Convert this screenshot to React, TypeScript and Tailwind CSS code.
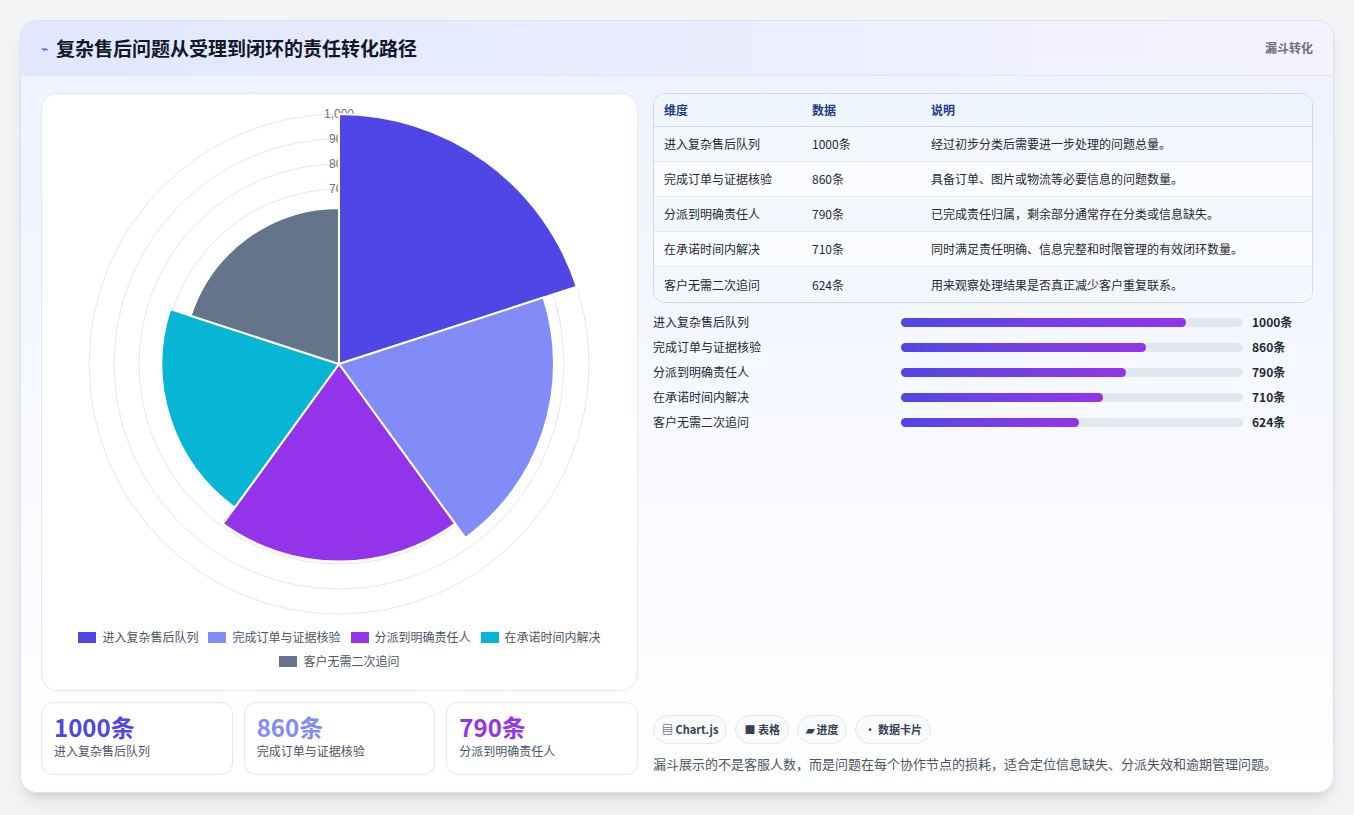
const F = { fontFamily: '"Noto Sans CJK SC", "Liberation Sans", sans-serif' };

const rows = [
  { name: "进入复杂售后队列", v: 1000, note: "经过初步分类后需要进一步处理的问题总量。", color: "#4f46e5" },
  { name: "完成订单与证据核验", v: 860, note: "具备订单、图片或物流等必要信息的问题数量。", color: "#818cf8" },
  { name: "分派到明确责任人", v: 790, note: "已完成责任归属，剩余部分通常存在分类或信息缺失。", color: "#9333ea" },
  { name: "在承诺时间内解决", v: 710, note: "同时满足责任明确、信息完整和时限管理的有效闭环数量。", color: "#06b6d4" },
  { name: "客户无需二次追问", v: 624, note: "用来观察处理结果是否真正减少客户重复联系。", color: "#64748b" },
];

function Polar() {
  const cx = 298, cy = 270, R = 250;
  const slice = (i: number, v: number) => {
    const r = (v / 1000) * R;
    const a0 = ((-90 + i * 72) * Math.PI) / 180;
    const a1 = ((-90 + (i + 1) * 72) * Math.PI) / 180;
    return `M${cx} ${cy} L${cx + r * Math.cos(a0)} ${cy + r * Math.sin(a0)} A${r} ${r} 0 0 1 ${cx + r * Math.cos(a1)} ${cy + r * Math.sin(a1)} Z`;
  };
  return (
    <svg width="597" height="530" viewBox="0 0 597 530">
      {[1, 2, 3, 4, 5, 6, 7, 8, 9, 10].map((k) => (
        <circle key={k} cx={cx} cy={cy} r={k * 25} fill="none" stroke="#e5e7eb" strokeWidth="1" />
      ))}
      {[1000, 900, 800, 700].map((t) => (
        <text key={t} x={cx} y={cy - (t / 1000) * R + 4} textAnchor="middle" fontSize="12" fill="#6b7280" fontFamily="Liberation Sans, sans-serif">
          {t === 1000 ? "1,000" : t}
        </text>
      ))}
      {rows.map((r, i) => (
        <path key={i} d={slice(i, r.v)} fill={r.color} stroke="#fff" strokeWidth="2" />
      ))}
    </svg>
  );
}

export default function App() {
  return (
    <div className="min-h-screen bg-[#f3f4f6] p-5" style={F}>
      <div className="flex h-[773px] flex-col overflow-hidden rounded-2xl border border-[#dbe1f5] bg-gradient-to-b from-[#eef2ff] to-white shadow-lg">
        <div className="flex h-[55px] items-center justify-between border-b border-[#e0e6f5] bg-gradient-to-r from-[#e0e7ff] to-[#f5f3ff] px-5">
          <div className="flex items-center gap-2">
            <span className="text-xs text-[#4f46e5]">⌁</span>
            <h1 className="text-[19px] font-bold text-[#111827]">复杂售后问题从受理到闭环的责任转化路径</h1>
          </div>
          <span className="text-xs font-bold text-[#6b7280]">漏斗转化</span>
        </div>
        <div className="flex flex-1 gap-[15px] px-5 pt-[17px]">
          <div className="flex w-[597px] flex-col gap-[11px]">
            <div className="flex h-[598px] flex-col items-center rounded-2xl border border-[#e2e8f0] bg-white pt-0">
              <Polar />
              <div className="mt-[5px] flex w-[540px] flex-wrap justify-center gap-x-[10px] gap-y-[8px] text-xs text-[#4b5563]">
                {rows.map((r) => (
                  <span key={r.name} className="flex items-center gap-[6px]">
                    <span className="h-[11px] w-[18px]" style={{ background: r.color }} />
                    {r.name}
                  </span>
                ))}
              </div>
            </div>
            <div className="grid grid-cols-3 gap-[11px]">
              {rows.slice(0, 3).map((r) => (
                <div key={r.name} className="h-[73px] rounded-xl border border-[#e2e8f0] bg-white px-3 pt-2">
                  <div className="text-[24px] font-bold leading-8" style={{ color: r.color }}>{r.v}条</div>
                  <div className="text-xs text-[#4b5563]">{r.name}</div>
                </div>
              ))}
            </div>
          </div>
          <div className="flex flex-1 flex-col">
            <div className="overflow-hidden rounded-xl border border-[#cfd8e8] bg-white text-xs">
              <div className="flex h-[33px] items-center border-b border-[#cfd8e8] bg-[#eff6ff] font-bold text-[#1e3a8a]">
                <span className="w-[158px] pl-[10px]">维度</span>
                <span className="w-[119px]">数据</span>
                <span>说明</span>
              </div>
              {rows.map((r, i) => (
                <div key={r.name} className={`flex h-[35px] items-center text-[#1f2937] ${i < 4 ? "border-b border-[#e2e8f0]" : ""} ${i % 2 === 0 ? "bg-[#f5f7ff]" : "bg-[#fafcff]"}`}>
                  <span className="w-[158px] pl-[10px]">{r.name}</span>
                  <span className="w-[119px]">{r.v}条</span>
                  <span>{r.note}</span>
                </div>
              ))}
            </div>
            <div className="mt-[10px] flex flex-col gap-[7px]">
              {rows.map((r) => (
                <div key={r.name} className="flex h-[18px] items-center text-xs text-[#1f2937]">
                  <span className="w-[248px]">{r.name}</span>
                  <div className="h-[9px] w-[342px] rounded-full bg-[#e2e8f0]">
                    <div className="h-full rounded-full bg-gradient-to-r from-[#4f46e5] to-[#9333ea]" style={{ width: `${(r.v / 1200) * 100}%` }} />
                  </div>
                  <span className="ml-[9px] font-bold">{r.v}条</span>
                </div>
              ))}
            </div>
            <div className="mt-auto flex gap-2 text-[11px] font-bold text-[#374151]">
              {["▤ Chart.js", "■ 表格", "▰ 进度", "• 数据卡片"].map((t) => (
                <span key={t} className="rounded-full border border-[#e2e8f0] bg-[#f8fafc] px-[8px] py-[5px]">{t}</span>
              ))}
            </div>
            <p className="mb-[19px] mt-[10px] text-[13px] text-[#4b5563]">漏斗展示的不是客服人数，而是问题在每个协作节点的损耗，适合定位信息缺失、分派失效和逾期管理问题。</p>
          </div>
        </div>
      </div>
    </div>
  );
}
